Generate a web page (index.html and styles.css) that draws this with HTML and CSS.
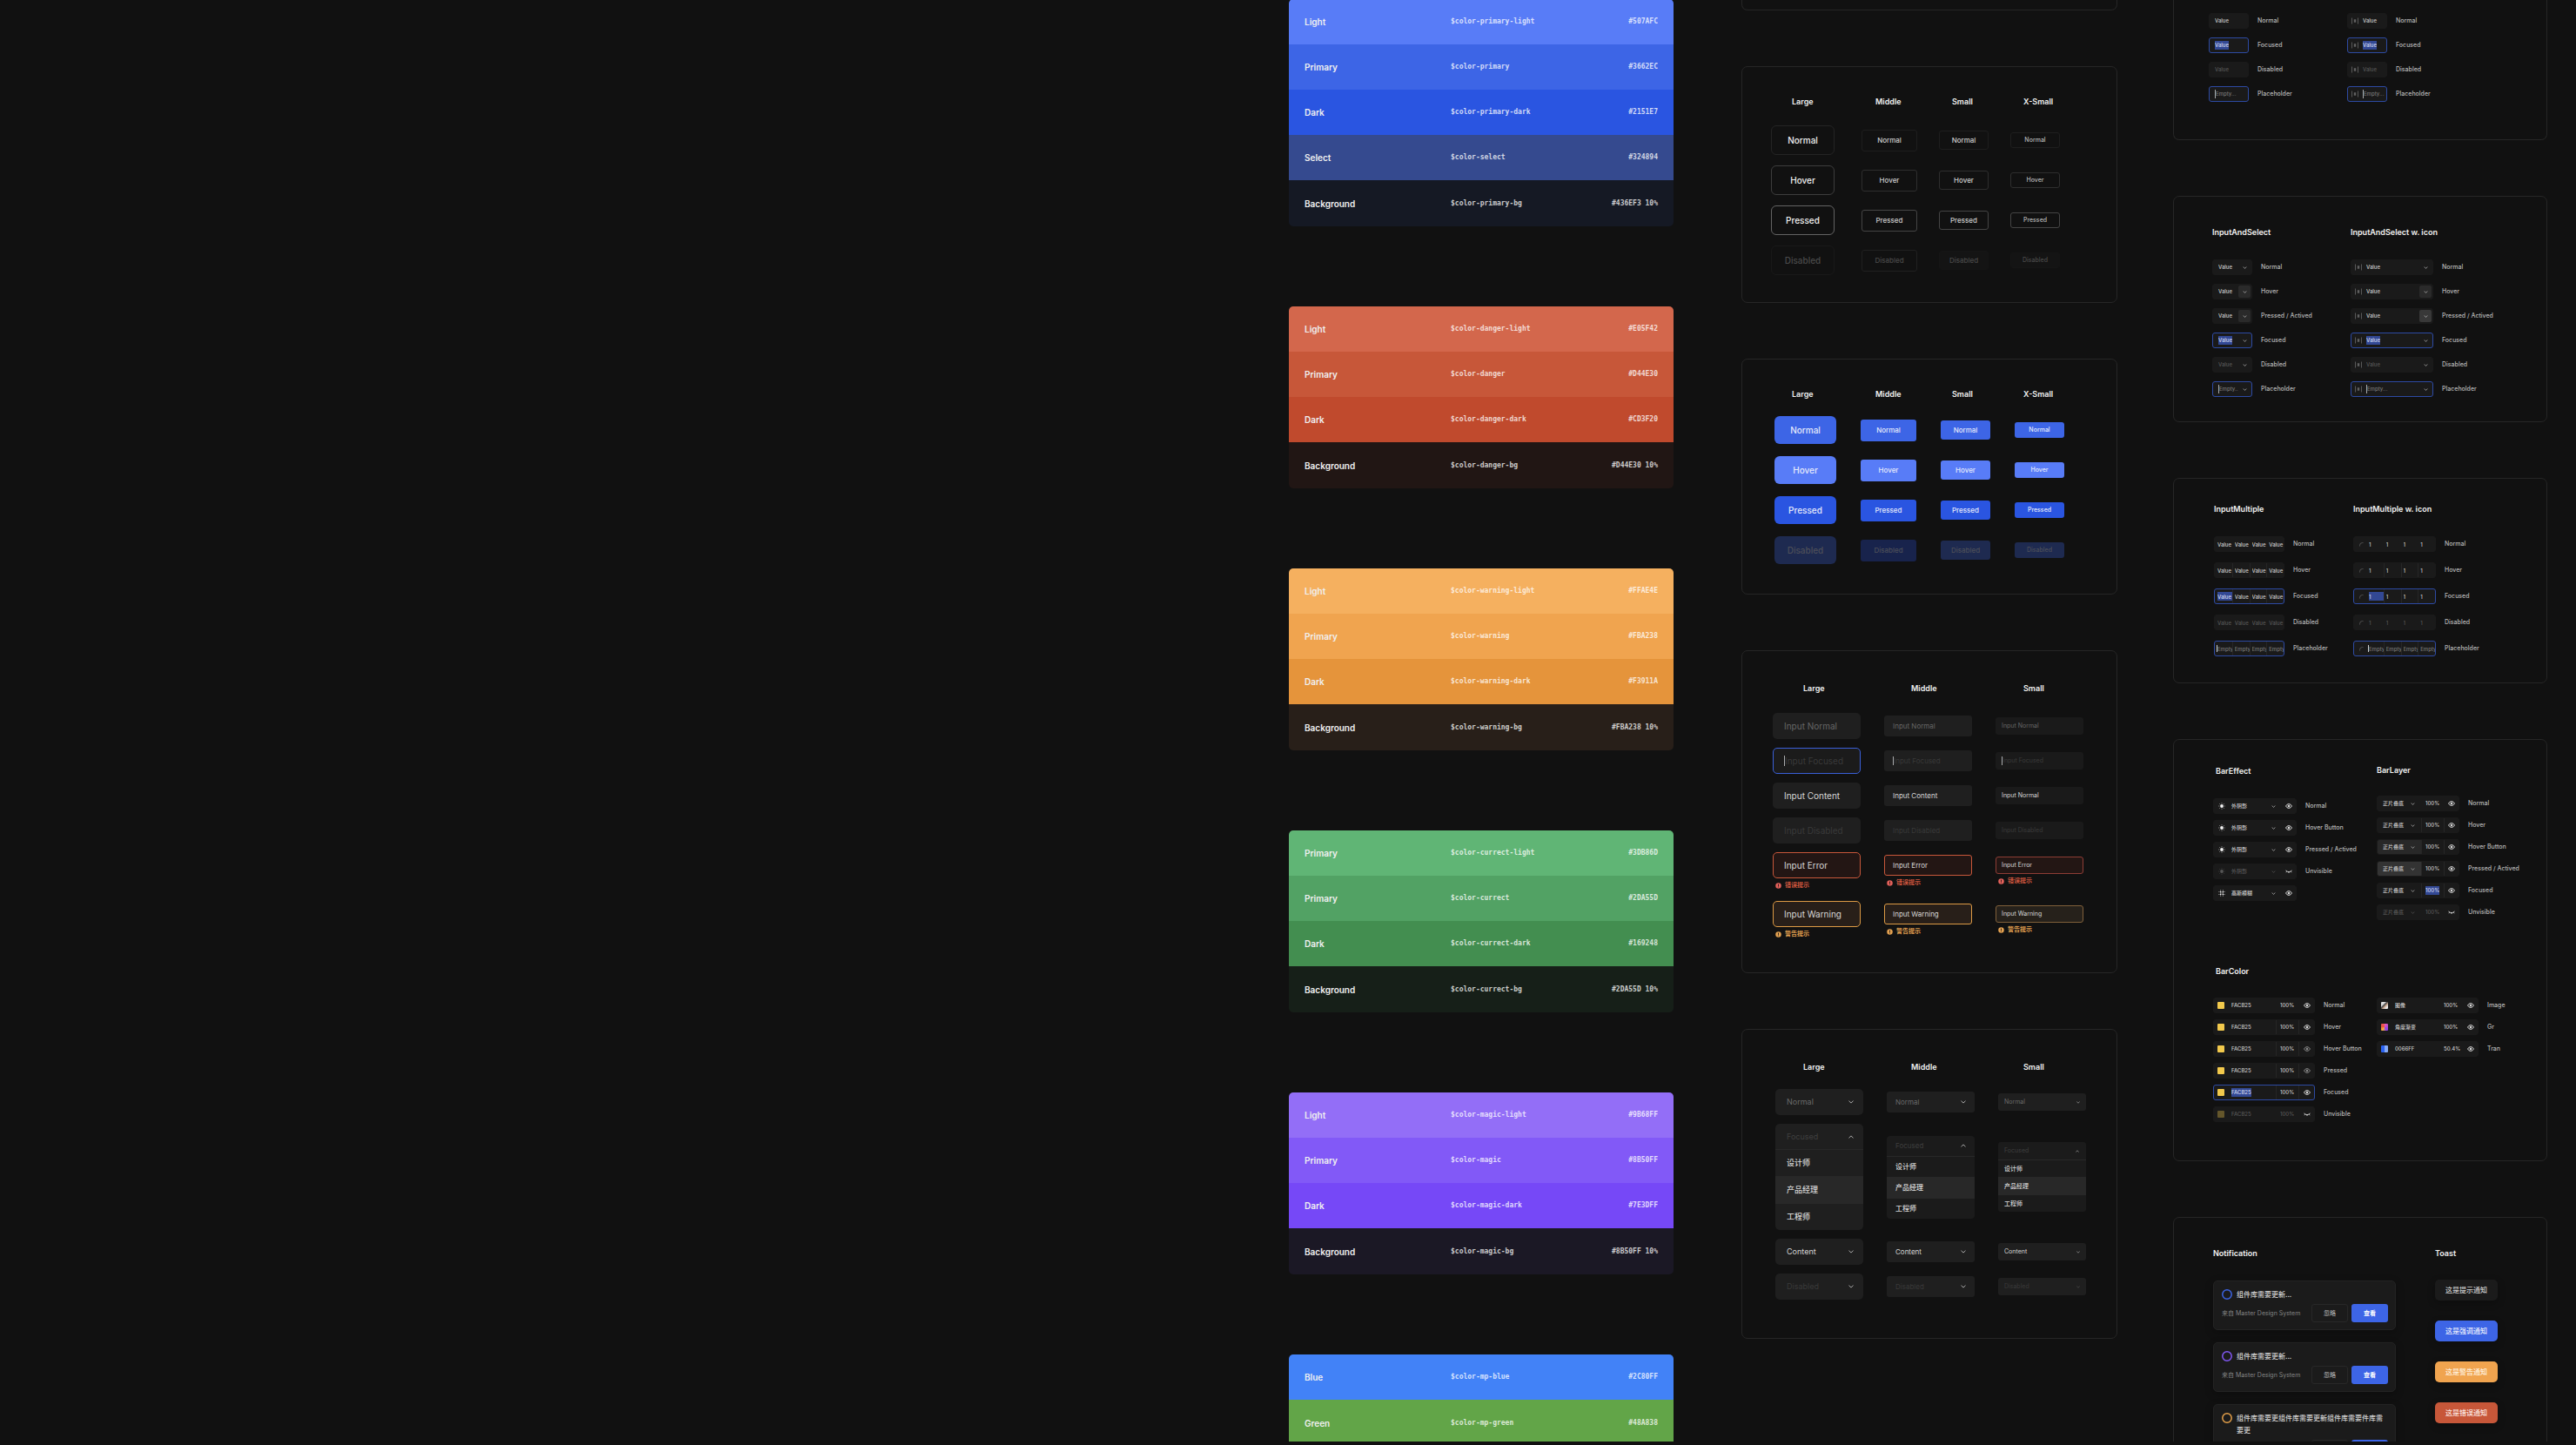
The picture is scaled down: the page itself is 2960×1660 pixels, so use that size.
FILE: index.html
```html
<!DOCTYPE html>
<html lang="zh-CN">
<head>
<meta charset="utf-8">
<meta name="viewport" content="width=device-width, initial-scale=1">
<title>Master Design System</title>
<link rel="stylesheet" href="styles.css">
</head>
<body>
<svg class="defs" aria-hidden="true">
  <symbol id="down" viewBox="0 0 6 4"><path d="M.5 .7 3 3.1 5.500 .7" fill="none" stroke="currentColor"/></symbol>
  <symbol id="up" viewBox="0 0 6 4"><path d="M.5 3.300 3 .9 5.500 3.300" fill="none" stroke="currentColor"/></symbol>
  <symbol id="width" viewBox="0 0 8 8"><path d="M.5 .5v7M7.500 .5v7" fill="none" stroke="currentColor" stroke-width=".9"/><path d="M2.800 2.200h2.400v3.600H2.800z" fill="currentColor"/></symbol>
  <symbol id="corner" viewBox="0 0 6 6"><path d="M.7 5.500V4A3.300 3.300 0 0 1 4 .7h1.500" fill="none" stroke="currentColor" stroke-width=".9"/></symbol>
  <symbol id="eye" viewBox="0 0 8 6"><path d="M.5 3Q1.900 .6 4 .6T7.500 3Q6.100 5.400 4 5.400T.5 3z" fill="none" stroke="currentColor" stroke-width="1"/><circle cx="4" cy="3" r="1.300" fill="currentColor"/></symbol>
  <symbol id="closed" viewBox="0 0 8 6"><path d="M.5 2Q4 5.200 7.500 2M1.600 3.200.9 4.200M4 3.700V5M6.400 3.200l.7 1" fill="none" stroke="currentColor" stroke-width=".9"/></symbol>
  <symbol id="sun" viewBox="0 0 8 8"><circle cx="4" cy="4" r="1.900" fill="currentColor"/><path d="M4 .3v1M4 6.700v1M.3 4h1M6.700 4h1M1.400 1.400l.7.7M5.900 5.900l.7.7M1.400 6.600l.7-.7M5.900 2.100l.7-.7" stroke="currentColor" stroke-width=".6"/></symbol>
  <symbol id="dots" viewBox="0 0 8 8"><path d="M2 2h1.400v1.400H2zM4.600 2H6v1.400H4.600zM2 4.600h1.400V6H2zM4.600 4.600H6V6H4.600z" fill="currentColor"/><path d="M2.300 .5h.8v.9h-.8zM4.900 .5h.8v.9h-.8zM2.300 6.600h.8v.9h-.8zM4.900 6.600h.8v.9h-.8zM.5 2.300h.9v.8H.5zM.5 4.900h.9v.8H.5zM6.600 2.300h.9v.8h-.9zM6.600 4.900h.9v.8h-.9z" fill="currentColor"/></symbol>
  <symbol id="alert" viewBox="0 0 8 8"><circle cx="4" cy="4" r="3.700" fill="currentColor"/><path d="M4 1.900v2.500M4 5.100v1" stroke="#111" stroke-width="1"/></symbol>
  <symbol id="ring" viewBox="0 0 12 12"><circle cx="6" cy="6" r="5.200" fill="none" stroke="currentColor" stroke-width="1.500"/></symbol>
</svg>

<main class="board">
  <section class="palettes">
    <ul class="palette">
      <li class="blue-light"><b>Light</b><code>$color-primary-light</code><code>#507AFC</code></li>
      <li class="blue"><b>Primary</b><code>$color-primary</code><code>#3662EC</code></li>
      <li class="blue-dark"><b>Dark</b><code>$color-primary-dark</code><code>#2151E7</code></li>
      <li class="select"><b>Select</b><code>$color-select</code><code>#324894</code></li>
      <li class="blue-bg"><b>Background</b><code>$color-primary-bg</code><code>#436EF3 10%</code></li>
    </ul>
    <ul class="palette">
      <li class="red-light"><b>Light</b><code>$color-danger-light</code><code>#E05F42</code></li>
      <li class="red"><b>Primary</b><code>$color-danger</code><code>#D44E30</code></li>
      <li class="red-dark"><b>Dark</b><code>$color-danger-dark</code><code>#CD3F20</code></li>
      <li class="red-bg"><b>Background</b><code>$color-danger-bg</code><code>#D44E30 10%</code></li>
    </ul>
    <ul class="palette">
      <li class="orange-light"><b>Light</b><code>$color-warning-light</code><code>#FFAE4E</code></li>
      <li class="orange"><b>Primary</b><code>$color-warning</code><code>#FBA238</code></li>
      <li class="orange-dark"><b>Dark</b><code>$color-warning-dark</code><code>#F3911A</code></li>
      <li class="orange-bg"><b>Background</b><code>$color-warning-bg</code><code>#FBA238 10%</code></li>
    </ul>
    <ul class="palette">
      <li class="green-light"><b>Primary</b><code>$color-currect-light</code><code>#3DB86D</code></li>
      <li class="green"><b>Primary</b><code>$color-currect</code><code>#2DA55D</code></li>
      <li class="green-dark"><b>Dark</b><code>$color-currect-dark</code><code>#169248</code></li>
      <li class="green-bg"><b>Background</b><code>$color-currect-bg</code><code>#2DA55D 10%</code></li>
    </ul>
    <ul class="palette">
      <li class="purple-light"><b>Light</b><code>$color-magic-light</code><code>#9B68FF</code></li>
      <li class="purple"><b>Primary</b><code>$color-magic</code><code>#8B50FF</code></li>
      <li class="purple-dark"><b>Dark</b><code>$color-magic-dark</code><code>#7E3DFF</code></li>
      <li class="purple-bg"><b>Background</b><code>$color-magic-bg</code><code>#8B50FF 10%</code></li>
    </ul>
    <ul class="palette">
      <li class="mp-blue"><b>Blue</b><code>$color-mp-blue</code><code>#2C80FF</code></li>
      <li class="mp-green"><b>Green</b><code>$color-mp-green</code><code>#48A838</code></li>
    </ul>
  </section>

  <section class="cards basics">
    <div class="card stub"></div>

    <article class="card buttons">
      <header><h3>Large</h3><h3>Middle</h3><h3>Small</h3><h3>X-Small</h3></header>
      <div class="button-grid outline">
        <button class="lg">Normal</button><button class="md">Normal</button><button class="sm">Normal</button><button class="xs">Normal</button>
        <button class="lg hover">Hover</button><button class="md hover">Hover</button><button class="sm hover">Hover</button><button class="xs hover">Hover</button>
        <button class="lg pressed">Pressed</button><button class="md pressed">Pressed</button><button class="sm pressed">Pressed</button><button class="xs pressed">Pressed</button>
        <button class="lg" disabled>Disabled</button><button class="md" disabled>Disabled</button><button class="sm" disabled>Disabled</button><button class="xs" disabled>Disabled</button>
      </div>
    </article>

    <article class="card buttons">
      <header><h3>Large</h3><h3>Middle</h3><h3>Small</h3><h3>X-Small</h3></header>
      <div class="button-grid solid">
        <button class="lg">Normal</button><button class="md">Normal</button><button class="sm">Normal</button><button class="xs">Normal</button>
        <button class="lg hover">Hover</button><button class="md hover">Hover</button><button class="sm hover">Hover</button><button class="xs hover">Hover</button>
        <button class="lg pressed">Pressed</button><button class="md pressed">Pressed</button><button class="sm pressed">Pressed</button><button class="xs pressed">Pressed</button>
        <button class="lg" disabled>Disabled</button><button class="md" disabled>Disabled</button><button class="sm" disabled>Disabled</button><button class="xs" disabled>Disabled</button>
      </div>
    </article>

    <article class="card inputs">
      <header><h3>Large</h3><h3>Middle</h3><h3>Small</h3></header>
      <div class="input-cols">
        <div class="col lg">
          <div class="box"><input aria-label="Large normal" placeholder="Input Normal"></div>
          <div class="box focus"><input class="caret faint" aria-label="Large focused" placeholder="Input Focused"></div>
          <div class="box"><input aria-label="Large content" value="Input Content"></div>
          <div class="box"><input class="faint" aria-label="Large disabled" placeholder="Input Disabled" disabled></div>
          <div class="note"><div class="box error"><input aria-label="Large error" value="Input Error"></div><p class="error"><svg><use href="#alert"/></svg>错误提示</p></div>
          <div class="note"><div class="box warning"><input aria-label="Large warning" value="Input Warning"></div><p class="warning"><svg><use href="#alert"/></svg>警告提示</p></div>
        </div>
        <div class="col md">
          <div class="box"><input aria-label="Middle normal" placeholder="Input Normal"></div>
          <div class="box"><input class="caret faint" aria-label="Middle focused" placeholder="Input Focused"></div>
          <div class="box"><input aria-label="Middle content" value="Input Content"></div>
          <div class="box"><input class="faint" aria-label="Middle disabled" placeholder="Input Disabled" disabled></div>
          <div class="note"><div class="box error"><input aria-label="Middle error" value="Input Error"></div><p class="error"><svg><use href="#alert"/></svg>错误提示</p></div>
          <div class="note"><div class="box warning"><input aria-label="Middle warning" value="Input Warning"></div><p class="warning"><svg><use href="#alert"/></svg>警告提示</p></div>
        </div>
        <div class="col sm">
          <div class="box"><input aria-label="Small normal" placeholder="Input Normal"></div>
          <div class="box"><input class="caret faint" aria-label="Small focused" placeholder="Input Focused"></div>
          <div class="box"><input aria-label="Small content" value="Input Normal"></div>
          <div class="box"><input class="faint" aria-label="Small disabled" placeholder="Input Disabled" disabled></div>
          <div class="note"><div class="box error"><input aria-label="Small error" value="Input Error"></div><p class="error"><svg><use href="#alert"/></svg>错误提示</p></div>
          <div class="note"><div class="box warning"><input aria-label="Small warning" value="Input Warning"></div><p class="warning"><svg><use href="#alert"/></svg>警告提示</p></div>
        </div>
      </div>
    </article>

    <article class="card inputs">
      <header><h3>Large</h3><h3>Middle</h3><h3>Small</h3></header>
      <div class="select-grid">
        <div class="box lg"><select class="dim" aria-label="Large"><option>Normal</option></select><svg><use href="#down"/></svg></div>
        <div class="box md"><select class="dim" aria-label="Middle"><option>Normal</option></select><svg><use href="#down"/></svg></div>
        <div class="box sm"><select class="dim" aria-label="Small"><option>Normal</option></select><svg><use href="#down"/></svg></div>

        <div class="menu lg"><button>Focused<svg><use href="#up"/></svg></button><ul><li>设计师</li><li class="on">产品经理</li><li>工程师</li></ul></div>
        <div class="menu md"><button>Focused<svg><use href="#up"/></svg></button><ul><li>设计师</li><li class="on">产品经理</li><li>工程师</li></ul></div>
        <div class="menu sm"><button>Focused<svg><use href="#up"/></svg></button><ul><li>设计师</li><li class="on">产品经理</li><li>工程师</li></ul></div>

        <div class="box lg"><select aria-label="Large content"><option>Content</option></select><svg><use href="#down"/></svg></div>
        <div class="box md"><select aria-label="Middle content"><option>Content</option></select><svg><use href="#down"/></svg></div>
        <div class="box sm"><select aria-label="Small content"><option>Content</option></select><svg><use href="#down"/></svg></div>

        <div class="box lg"><select aria-label="Large disabled" disabled><option>Disabled</option></select><svg><use href="#down"/></svg></div>
        <div class="box md"><select aria-label="Middle disabled" disabled><option>Disabled</option></select><svg><use href="#down"/></svg></div>
        <div class="box sm off"><select aria-label="Small disabled" disabled><option>Disabled</option></select><svg><use href="#down"/></svg></div>
      </div>
    </article>
  </section>

  <section class="cards panels">
    <article class="card stub value-inputs">
      <div class="pair">
        <div class="rows">
          <label class="row"><span class="ctl w46"><input value="Value"></span>Normal</label>
          <label class="row"><span class="ctl w46 focus"><input class="hl" value="Value"></span>Focused</label>
          <label class="row"><span class="ctl w46"><input value="Value" disabled></span>Disabled</label>
          <label class="row"><span class="ctl w46 focus"><input class="caret" placeholder="Empty..."></span>Placeholder</label>
        </div>
        <div class="rows">
          <label class="row"><span class="ctl w46 icon"><svg><use href="#width"/></svg><input value="Value"></span>Normal</label>
          <label class="row"><span class="ctl w46 icon focus"><svg><use href="#width"/></svg><input class="hl" value="Value"></span>Focused</label>
          <label class="row"><span class="ctl w46 icon"><svg><use href="#width"/></svg><input value="Value" disabled></span>Disabled</label>
          <label class="row"><span class="ctl w46 icon focus"><svg><use href="#width"/></svg><input class="caret" placeholder="Empty..."></span>Placeholder</label>
        </div>
      </div>
    </article>

    <article class="card input-select">
      <div class="pair">
        <div class="rows">
          <h3>InputAndSelect</h3>
          <label class="row"><span class="ctl w46"><input value="Value"><button aria-label="Open"><svg><use href="#down"/></svg></button></span>Normal</label>
          <label class="row"><span class="ctl w46"><input value="Value"><button class="hover" aria-label="Open"><svg><use href="#down"/></svg></button></span>Hover</label>
          <label class="row"><span class="ctl w46"><input value="Value"><button class="hover" aria-label="Open"><svg><use href="#down"/></svg></button></span>Pressed / Actived</label>
          <label class="row"><span class="ctl w46 focus"><input class="hl" value="Value"><button aria-label="Open"><svg><use href="#down"/></svg></button></span>Focused</label>
          <label class="row"><span class="ctl w46"><input value="Value" disabled><button aria-label="Open"><svg><use href="#down"/></svg></button></span>Disabled</label>
          <label class="row"><span class="ctl w46 focus"><input class="caret" placeholder="Empty..."><button aria-label="Open"><svg><use href="#down"/></svg></button></span>Placeholder</label>
        </div>
        <div class="rows">
          <h3>InputAndSelect w. icon</h3>
          <label class="row"><span class="ctl w95 icon"><svg><use href="#width"/></svg><input value="Value"><button aria-label="Open"><svg><use href="#down"/></svg></button></span>Normal</label>
          <label class="row"><span class="ctl w95 icon"><svg><use href="#width"/></svg><input value="Value"><button class="hover" aria-label="Open"><svg><use href="#down"/></svg></button></span>Hover</label>
          <label class="row"><span class="ctl w95 icon"><svg><use href="#width"/></svg><input value="Value"><button class="pressed" aria-label="Open"><svg><use href="#down"/></svg></button></span>Pressed / Actived</label>
          <label class="row"><span class="ctl w95 icon focus"><svg><use href="#width"/></svg><input class="hl" value="Value"><button aria-label="Open"><svg><use href="#down"/></svg></button></span>Focused</label>
          <label class="row"><span class="ctl w95 icon"><svg><use href="#width"/></svg><input value="Value" disabled><button aria-label="Open"><svg><use href="#down"/></svg></button></span>Disabled</label>
          <label class="row"><span class="ctl w95 icon focus"><svg><use href="#width"/></svg><input class="caret" placeholder="Empty..."><button aria-label="Open"><svg><use href="#down"/></svg></button></span>Placeholder</label>
        </div>
      </div>
    </article>

    <article class="card input-multiple">
      <div class="pair">
        <div class="rows">
          <h3>InputMultiple</h3>
          <label class="row"><span class="ctl multi"><input value="Value"><input aria-label="2" value="Value"><input aria-label="3" value="Value"><input aria-label="4" value="Value"></span>Normal</label>
          <label class="row"><span class="ctl multi split"><input value="Value"><input aria-label="2" value="Value"><input aria-label="3" value="Value"><input aria-label="4" value="Value"></span>Hover</label>
          <label class="row"><span class="ctl multi split focus"><input class="fill" value="Value"><input aria-label="2" value="Value"><input aria-label="3" value="Value"><input aria-label="4" value="Value"></span>Focused</label>
          <label class="row"><span class="ctl multi"><input value="Value" disabled><input aria-label="2" value="Value" disabled><input aria-label="3" value="Value" disabled><input aria-label="4" value="Value" disabled></span>Disabled</label>
          <label class="row"><span class="ctl multi split focus"><input class="mark" placeholder="Empty"><input aria-label="2" placeholder="Empty"><input aria-label="3" placeholder="Empty"><input aria-label="4" placeholder="Empty"></span>Placeholder</label>
        </div>
        <div class="rows">
          <h3>InputMultiple w. icon</h3>
          <label class="row"><span class="ctl multi icon"><svg><use href="#corner"/></svg><input value="1"><input aria-label="2" value="1"><input aria-label="3" value="1"><input aria-label="4" value="1"></span>Normal</label>
          <label class="row"><span class="ctl multi split icon"><svg><use href="#corner"/></svg><input value="1"><input aria-label="2" value="1"><input aria-label="3" value="1"><input aria-label="4" value="1"></span>Hover</label>
          <label class="row"><span class="ctl multi split icon focus"><svg><use href="#corner"/></svg><input class="fill" value="1"><input aria-label="2" value="1"><input aria-label="3" value="1"><input aria-label="4" value="1"></span>Focused</label>
          <label class="row"><span class="ctl multi icon"><svg><use href="#corner"/></svg><input value="1" disabled><input aria-label="2" value="1" disabled><input aria-label="3" value="1" disabled><input aria-label="4" value="1" disabled></span>Disabled</label>
          <label class="row"><span class="ctl multi split icon focus"><svg><use href="#corner"/></svg><input class="mark" placeholder="Empty"><input aria-label="2" placeholder="Empty"><input aria-label="3" placeholder="Empty"><input aria-label="4" placeholder="Empty"></span>Placeholder</label>
        </div>
      </div>
    </article>

    <article class="card bars">
      <div class="pair effects">
        <div class="rows">
          <h3>BarEffect</h3>
          <label class="row"><span class="bar effect"><svg><use href="#sun"/></svg><select><option>外阴影</option></select><svg class="chev"><use href="#down"/></svg><svg class="eye"><use href="#eye"/></svg></span>Normal</label>
          <label class="row"><span class="bar effect"><svg><use href="#sun"/></svg><select><option>外阴影</option></select><svg class="chev"><use href="#down"/></svg><svg class="eye"><use href="#eye"/></svg></span>Hover Button</label>
          <label class="row"><span class="bar effect"><svg><use href="#sun"/></svg><select><option>外阴影</option></select><svg class="chev"><use href="#down"/></svg><svg class="eye"><use href="#eye"/></svg></span>Pressed / Actived</label>
          <label class="row"><span class="bar effect off"><svg><use href="#sun"/></svg><select disabled><option>外阴影</option></select><svg class="chev"><use href="#down"/></svg><svg class="eye"><use href="#closed"/></svg></span>Unvisible</label>
          <label class="row"><span class="bar effect"><svg><use href="#dots"/></svg><select aria-label="Blur"><option>高斯模糊</option></select><svg class="chev"><use href="#down"/></svg><svg class="eye"><use href="#eye"/></svg></span></label>
        </div>
        <div class="rows">
          <h3>BarLayer</h3>
          <label class="row"><span class="bar layer"><span class="blend"><select><option>正片叠底</option></select><svg class="chev"><use href="#down"/></svg></span><span class="pct"><input aria-label="Opacity" value="100%"></span><svg class="eye"><use href="#eye"/></svg></span>Normal</label>
          <label class="row"><span class="bar layer split"><span class="blend"><select><option>正片叠底</option></select><svg class="chev"><use href="#down"/></svg></span><span class="pct"><input aria-label="Opacity" value="100%"></span><svg class="eye"><use href="#eye"/></svg></span>Hover</label>
          <label class="row"><span class="bar layer split"><span class="blend hover"><select><option>正片叠底</option></select><svg class="chev"><use href="#down"/></svg></span><span class="pct"><input aria-label="Opacity" value="100%"></span><svg class="eye"><use href="#eye"/></svg></span>Hover Button</label>
          <label class="row"><span class="bar layer split"><span class="blend pressed"><select><option>正片叠底</option></select><svg class="chev"><use href="#down"/></svg></span><span class="pct"><input aria-label="Opacity" value="100%"></span><svg class="eye"><use href="#eye"/></svg></span>Pressed / Actived</label>
          <label class="row"><span class="bar layer split"><span class="blend"><select><option>正片叠底</option></select><svg class="chev"><use href="#down"/></svg></span><span class="pct"><input class="hl" aria-label="Opacity" value="100%"></span><svg class="eye"><use href="#eye"/></svg></span>Focused</label>
          <label class="row"><span class="bar layer off"><span class="blend"><select disabled><option>正片叠底</option></select><svg class="chev"><use href="#down"/></svg></span><span class="pct"><input aria-label="Opacity" value="100%" disabled></span><svg class="eye"><use href="#closed"/></svg></span>Unvisible</label>
        </div>
      </div>
      <h3 class="bar-title">BarColor</h3>
      <div class="pair colors">
        <div class="rows">
          <label class="row"><span class="bar color"><span class="hex"><i class="yellow"></i><input value="FACB25"></span><span class="pct"><input aria-label="Opacity" value="100%"></span><svg class="eye"><use href="#eye"/></svg></span>Normal</label>
          <label class="row"><span class="bar color split"><span class="hex"><i class="yellow"></i><input value="FACB25"></span><span class="pct"><input aria-label="Opacity" value="100%"></span><svg class="eye"><use href="#eye"/></svg></span>Hover</label>
          <label class="row"><span class="bar color split"><span class="hex"><i class="yellow"></i><input value="FACB25"></span><span class="pct"><input aria-label="Opacity" value="100%"></span><svg class="eye dim"><use href="#eye"/></svg></span>Hover Button</label>
          <label class="row"><span class="bar color split"><span class="hex"><i class="yellow"></i><input value="FACB25"></span><span class="pct"><input aria-label="Opacity" value="100%"></span><svg class="eye dim"><use href="#eye"/></svg></span>Pressed</label>
          <label class="row"><span class="bar color split focus"><span class="hex"><i class="yellow"></i><input class="hl" value="FACB25"></span><span class="pct"><input aria-label="Opacity" value="100%"></span><svg class="eye"><use href="#eye"/></svg></span>Focused</label>
          <label class="row"><span class="bar color off"><span class="hex"><i class="yellow"></i><input value="FACB25" disabled></span><span class="pct"><input aria-label="Opacity" value="100%" disabled></span><svg class="eye"><use href="#closed"/></svg></span>Unvisible</label>
        </div>
        <div class="rows">
          <label class="row"><span class="bar color"><span class="hex"><i class="photo"></i><input value="图像"></span><span class="pct"><input aria-label="Opacity" value="100%"></span><svg class="eye"><use href="#eye"/></svg></span>Image</label>
          <label class="row"><span class="bar color"><span class="hex"><i class="gradient"></i><input value="角度渐变"></span><span class="pct"><input aria-label="Opacity" value="100%"></span><svg class="eye"><use href="#eye"/></svg></span>Gr</label>
          <label class="row"><span class="bar color"><span class="hex"><i class="alpha"></i><input value="0066FF"></span><span class="pct"><input aria-label="Opacity" value="50.4%"></span><svg class="eye"><use href="#eye"/></svg></span>Tran</label>
        </div>
      </div>
    </article>

    <article class="card messages">
      <div class="notices">
        <h3>Notification</h3>
        <div class="notice">
          <h4><svg class="c-blue"><use href="#ring"/></svg>组件库需要更新...</h4>
          <footer><p>来自 Master Design System</p><button>忽略</button><button class="go">查看</button></footer>
        </div>
        <div class="notice">
          <h4><svg class="c-purple"><use href="#ring"/></svg>组件库需要更新...</h4>
          <footer><p>来自 Master Design System</p><button>忽略</button><button class="go">查看</button></footer>
        </div>
        <div class="notice">
          <h4><svg class="c-orange"><use href="#ring"/></svg>组件库需要更组件库需要更新组件库需要件库需要更</h4>
          <footer><p></p><button aria-label="忽略"></button><button class="go" aria-label="查看"></button></footer>
        </div>
      </div>
      <div class="toasts">
        <h3>Toast</h3>
        <p class="toast">这是提示通知</p>
        <p class="toast blue">这是强调通知</p>
        <p class="toast orange">这是警告通知</p>
        <p class="toast red">这是错误通知</p>
      </div>
    </article>
  </section>
</main>
</body>
</html>
```
FILE: styles.css
```css
* { box-sizing: border-box; }

:root {
  --bg: #111;
  --line: #262626;
  --field: #1a1a1a;
  --text: #ccc;
  --select: #324894;
  --focus: #2d4aa3;
}

body {
  margin: 0;
  background: var(--bg);
  color: #eee;
  font-family: Inter, "Noto Sans CJK SC", sans-serif;
  font-size: 7px;
  line-height: 10px;
}

h3, h4, p, ul { margin: 0; padding: 0; }
li { list-style: none; }
h3 { font-size: 9px; line-height: 12px; font-weight: 600; color: #f2f2f2; }

button, input, select {
  margin: 0;
  padding: 0;
  border: 0;
  background: transparent;
  color: inherit;
  font: inherit;
  appearance: none;
}

input { min-width: 0; outline: 0; }
select, select:disabled { opacity: 1; }
svg { display: block; flex: none; overflow: visible; }
.defs { position: absolute; width: 0; height: 0; }

/* Board: a wide canvas, each column takes a share of the window */
.board {
  display: grid;
  grid-template-columns: 1481fr 442fr 78fr 432fr 64fr 430fr 33fr;
  align-items: start;
  height: calc(100vh - 4px);
  overflow: hidden;
}
.palettes { grid-column: 2; }
.basics { grid-column: 4; }
.panels { grid-column: 6; }

/* Palettes */
.palettes { display: flex; flex-direction: column; gap: 92px; margin-top: -1px; }
.palette { border-radius: 5px; overflow: hidden; }
.palette li {
  display: grid;
  grid-template-columns: 168px 1fr auto;
  align-items: center;
  height: 52px;
  padding: 0 18px;
}
.palette li:last-child { height: 53px; }
.palette b { font-size: 10px; font-weight: 600; color: #f0f0f0; }
.palette code { font-family: "DejaVu Sans Mono", "Liberation Mono", monospace; font-size: 8px; font-weight: 700; color: rgba(255, 255, 255, .78); }

.blue-light { background: #587cf7; }
.blue { background: #3d65e6; }
.blue-dark { background: #2a55e1; }
.select { background: #354a8f; }
.blue-bg { background: #151924; }
.red-light { background: #d3674c; }
.red { background: #c75739; }
.red-dark { background: #c04a2d; }
.red-bg { background: #211614; }
.orange-light { background: #f5b05f; }
.orange { background: #f0a44f; }
.orange-dark { background: #e5943b; }
.orange-bg { background: #281f19; }
.green-light { background: #60b575; }
.green { background: #52a264; }
.green-dark { background: #438e50; }
.green-bg { background: #161f18; }
.purple-light { background: #936ef7; }
.purple { background: #8259f7; }
.purple-dark { background: #7648f7; }
.purple-bg { background: #1b1825; }
.mp-blue { background: #4282f7; }
.mp-green { background: #62a548; }

/* Cards */
.cards { display: flex; flex-direction: column; gap: 64px; }
.card { border: 1px solid var(--line); border-radius: 7px; }
.stub { border-top: 0; border-radius: 0 0 7px 7px; min-height: 12px; }

/* Buttons */
.buttons { padding: 34px 0 25px; }
.buttons header { display: grid; grid-template-columns: 96px 88px 82px auto; padding-left: 57px; }
.button-grid { display: grid; grid-auto-rows: 46px; align-items: center; }
.outline { grid-template-columns: 104px 89px 82px 57px; padding-left: 33px; margin-top: 15px; }
.solid { grid-template-columns: 99px 92px 85px 57px; padding-left: 37px; margin: 12px 0 2px; }
.button-grid button { border: 1px solid #1e1e1e; font-weight: 500; color: #ccc; }
.button-grid .lg { width: 73px; height: 34px; border-radius: 6px; font-size: 10px; color: #f0f0f0; border-color: #242424; }
.button-grid .md { width: 64px; height: 25px; border-radius: 3px; font-size: 8px; }
.button-grid .sm { width: 57px; height: 22px; border-radius: 3px; font-size: 8px; }
.button-grid .xs { width: 57px; height: 18px; border-radius: 3px; font-size: 7px; color: #b4b4b4; }
.outline .hover { border-color: #2e2e2e; }
.outline .lg.hover { border-color: #3d3d3d; }
.outline .pressed { border-color: #444; }
.outline .lg.pressed { border-color: #636363; }
.outline button:disabled { color: #4a4a4a; border-color: #191919; }
.outline .md:disabled { border-color: #202020; }
.outline .sm:disabled, .outline .xs:disabled { background: #141414; border-color: #151515; }
.button-grid.solid button { border: 0; background: #3d65e6; color: #e4e9fb; }
.solid .lg { width: 71px; height: 32px; }
.button-grid.solid .hover { background: #587cf7; }
.button-grid.solid .pressed { background: #2a55e1; }
.button-grid.solid button:disabled { background: #1e2a50; color: #4d4f59; }
.button-grid.solid .md:disabled { background: #18234c; }
.button-grid.solid .lg { width: 71px; height: 32px; }

/* Inputs */
.inputs header { display: grid; grid-template-columns: 124px 129px auto; padding: 37px 0 0 70px; }
.box {
  display: flex;
  align-items: center;
  width: 101px;
  background: #1f1f1f;
  color: #d8d8d8;
}
.box input, .box select { flex: 1; width: 100%; }
.box input::placeholder { color: #666; opacity: 1; }
.box input.faint::placeholder { color: #3a3a3a; }
.box .caret { border-left: 1px solid #aaa; }
.box.lg, .lg .box { height: 30px; padding: 0 13px; border-radius: 5px; font-size: 10px; }
.box.md, .md .box { height: 24px; padding: 0 10px; border-radius: 3px; font-size: 8px; }
.box.sm, .sm .box { height: 20px; padding: 0 7px; border-radius: 3px; font-size: 7px; }
.col.sm .box { background: #1a1a1a; }
.box.focus { border: 1px solid #3a60d8; background: #1b1b1b; padding: 0 12px; }
.col .box.error { border: 1px solid #c7573a; background: #231614; }
.col .box.warning { border: 1px solid #dc9a45; background: #281f19; }
.col.sm .box.error { border-color: #8e3d35; }
.col.sm .box.warning { border-color: #80603a; background: #26211b; }
.col.lg .note .box { padding: 0 12px; }
.col.md .note .box { padding: 0 9px; }
.col.sm .note .box { padding: 0 6px; }
.input-cols { display: flex; gap: 27px; padding: 22px 0 36px 35px; }
.col { display: flex; flex-direction: column; gap: 10px; }
.col.md { gap: 16px; padding-top: 3px; }
.col.sm { gap: 20px; padding-top: 5px; }
.note p { display: flex; align-items: center; gap: 4px; height: 16px; padding-left: 3px; font-weight: 700; }
.note svg { width: 7px; height: 7px; }
p.error { color: #d0573f; }
p.error svg { color: #e2605a; }
p.warning { color: #e2a050; }

/* Selects */
.select-grid {
  display: grid;
  grid-template-columns: 101px 101px 101px;
  column-gap: 27px;
  row-gap: 10px;
  align-items: center;
  padding: 19px 0 44px 38px;
}
.box.lg:has(select) { font-size: 9px; }
.select-grid svg { width: 6px; height: 4px; color: #aaa; }
.select-grid .sm svg { width: 4px; height: 3px; }
.select-grid .lg > svg { margin-right: -2px; }
.select-grid .off svg { color: #555; }
.box .dim { color: #6a6a6a; }
.box select:disabled { color: #3a3a3a; }
.menu { width: 101px; overflow: hidden; background: #1b1b1b; }
.menu.lg { border-radius: 5px; font-size: 9px; background: #1f1f1f; }
.menu.md { border-radius: 4px; font-size: 8px; }
.menu.sm { border-radius: 3px; font-size: 7px; }
.menu button { display: flex; align-items: center; justify-content: space-between; width: 100%; color: #3f3f3f; }
.menu li { display: flex; align-items: center; border-top: 1px solid #282828; color: #d8d8d8; font-weight: 500; }
.menu li.on { background: #282828; }
.menu.lg button { height: 29px; padding: 0 11px 0 13px; }
.menu.lg li { height: 31px; padding: 0 13px; }
.menu.md button { height: 23px; padding: 0 10px; }
.menu.md li { height: 24px; padding: 0 10px; }
.menu.sm button { height: 20px; padding: 0 8px 0 7px; }
.menu.sm li { height: 20px; padding: 0 7px; }

/* Property panels */
.pair { display: grid; grid-template-columns: 159px auto; }
.rows { display: flex; flex-direction: column; gap: 10px; }
.row { display: flex; align-items: center; gap: 10px; color: #b8b8b8; font-weight: 500; height: 18px; }
.ctl, .bar {
  display: flex;
  align-items: center;
  height: 18px;
  border: 1px solid var(--field);
  border-radius: 3px;
  background: var(--field);
  color: var(--text);
  font-size: 6px;
  overflow: hidden;
}
.ctl.focus, .bar.focus { border-color: var(--focus); }
.ctl { padding-left: 6px; }
.ctl input { flex: 1; width: 100%; height: 10px; }
.ctl input::placeholder { color: #777; opacity: 1; }
.ctl input:disabled { color: #585858; }
.ctl .caret { border-left: 1px solid #aaa; }
.ctl .hl, .bar .hl { flex: none; width: auto; field-sizing: content; background: var(--select); color: #d5dbef; }
.w46 { width: 46px; }
.w95 { width: 95px; }
.ctl.icon { padding-left: 4px; gap: 5px; }
.ctl.icon > svg { width: 8px; height: 8px; color: #606060; }
.ctl button { display: grid; place-items: center; flex: none; width: 14px; height: 14px; margin: 0 1px 0 auto; border-radius: 2px; }
.ctl button svg, .chev { width: 5px; height: 3px; color: #bbb; }
.ctl .hover { background: #2a2a2a; }
.ctl .pressed { background: #383838; }

.value-inputs { padding: 15px 0 43px 40px; }
.input-select { padding: 35px 0 28px 44px; }
.input-select h3 { margin-bottom: 15px; }
.input-multiple { padding: 29px 0 30px 46px; }
.input-multiple .pair { grid-template-columns: 160px auto; }
.input-multiple .rows { gap: 12px; }
.input-multiple h3 { margin-bottom: 13px; }
.ctl.multi { width: 81px; padding: 0; }
.ctl.multi.icon { width: 95px; padding-left: 6px; gap: 0; }
.ctl.multi.icon > svg { width: 5px; height: 5px; margin-right: 3px; }
.multi input { padding-left: 2px; height: 16px; border-left: 1px solid transparent; }
.multi.split input + input { border-left-color: #262626; }
.multi .fill { background: linear-gradient(var(--select), var(--select)) 2px 3px / 100% 10px no-repeat; color: #d5dbef; }
.multi .mark { background: linear-gradient(#ccc, #ccc) 1px 4px / 1px 8px no-repeat; }

/* Bars */
.bars { padding: 29px 0 43px 45px; }
.bars .pair { grid-template-columns: 188px auto; }
.bars .rows { gap: 7px; }
.bars h3 { padding-left: 3px; }
.effects .rows:first-child { padding-top: 1px; }
.effects .rows:last-child h3 { padding-left: 0; margin-bottom: 16px; }
.effects h3 { margin-bottom: 18px; }
.bar-title { margin-top: 53px; }
.bars .colors { margin-top: 24px; padding-bottom: 1px; }
.bar.effect { width: 96px; padding-left: 5px; }
.bar > svg:first-child { width: 8px; height: 8px; color: #f2f2f2; }
.effect select { flex: 1; margin-left: 7px; }
.effect .chev { margin-right: 11px; }
.eye, .bar > svg.eye { width: 8px; height: 6px; color: #d8d8d8; margin-left: auto; margin-right: 4px; }
.bar.effect > svg.eye { margin-left: 0; }
.bar > svg.eye.dim { color: #888; }
.bar.layer { width: 95px; }
.bar.color { width: 117px; }
.blend { display: flex; align-items: center; justify-content: space-between; width: 50px; height: 16px; padding: 0 7px 0 6px; }
.blend.hover { background: #282828; }
.blend.pressed { background: #333; }
.pct { display: flex; align-items: center; width: 27px; height: 16px; padding-left: 4px; border: 0 solid transparent; border-width: 0 1px; }
.pct input { width: 100%; }
.split .pct { border-color: #262626; }
.hex { display: flex; align-items: center; width: 71px; padding-left: 4px; gap: 8px; }
.hex input { width: 48px; }
.hex i { flex: none; width: 8px; height: 8px; border-radius: 1px; }
.yellow { background: #f2c94c; }
.photo { background: linear-gradient(135deg, #ddd 30%, #444 45%, #c9a58c 60%, #eee 80%); }
.gradient { background: conic-gradient(#e85ab0, #8a3ff0 40%, #f5b03c 60%, #e8553c 80%, #f0556a); }
.alpha { background: linear-gradient(90deg, #2a62f0 50%, #86aaf5 50%); }
.bar.off > svg:first-child, .bar.off .chev { color: #555; }
.bar.off select, .bar.off input { color: #585858; }
.bar.off i { opacity: .35; }

/* Notifications and toasts */
.messages { display: grid; grid-template-columns: 255px auto; align-items: start; padding: 35px 0 40px 45px; }
.messages h3 { margin-bottom: 11px; }
.notices { display: flex; flex-direction: column; gap: 14px; width: 210px; }
.notice {
  padding: 8px 8px 8px 9px;
  border: 1px solid #232323;
  border-radius: 5px;
  background: #1b1b1b;
  box-shadow: 0 3px 10px rgba(0, 0, 0, .25);
}
.notice h4 { display: flex; gap: 5px; font-size: 8px; line-height: 14px; font-weight: 500; color: #d0d0d0; }
.notice h4 svg { width: 12px; height: 12px; margin-top: 1px; }
.c-blue { color: #3d65e6; }
.c-purple { color: #8259f7; }
.c-orange { color: #e5a04a; }
.notice footer { display: flex; align-items: center; gap: 4px; margin-top: 4px; }
.notice p { flex: 1; color: #858585; }
.notice button { width: 42px; height: 21px; border: 1px solid #282828; border-radius: 3px; color: #bbb; }
.notice .go { border: 0; background: #3d65e6; color: #fff; font-weight: 700; }
.toasts { display: flex; flex-direction: column; align-items: flex-start; gap: 23px; }
.toasts h3 { margin-bottom: 1px; }
.toast {
  padding: 5px 12px;
  border-radius: 5px;
  background: #1b1b1b;
  box-shadow: 0 3px 8px rgba(0, 0, 0, .25);
  color: #ccc;
  font-size: 8px;
  line-height: 14px;
  font-weight: 500;
}
.toast.blue { background: #3d65e6; color: #e8ecfc; }
.toast.orange { background: #f0a44f; color: #fff3e0; }
.toast.red { background: #c75739; color: #fbe6e0; }
```
